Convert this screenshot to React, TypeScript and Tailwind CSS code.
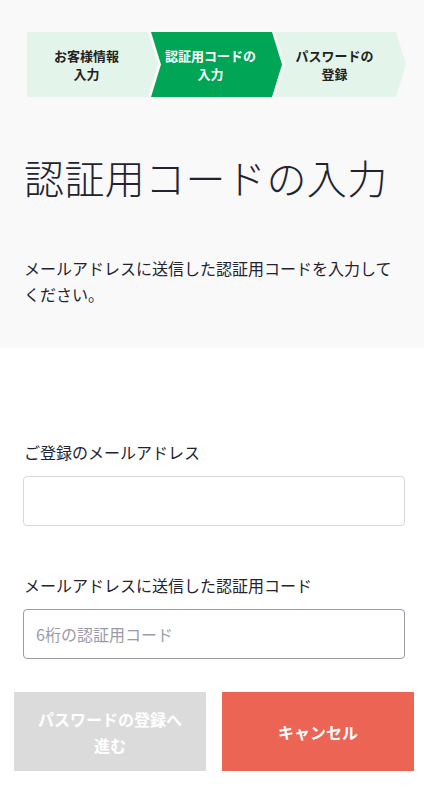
import React from "react";

const font = { fontFamily: '"Noto Sans CJK JP", "Noto Sans", sans-serif' };

const steps = [
  { label: ["お客様情報", "入力"], active: false },
  { label: ["認証用コードの", "入力"], active: true },
  { label: ["パスワードの", "登録"], active: false },
];

function Steps() {
  return (
    <div className="flex pl-[27px]">
      {steps.map((s, i) => (
        <div
          key={i}
          className={`flex h-[65px] w-[131px] shrink-0 flex-col items-center justify-center pr-3 text-[13px] font-bold leading-[18px] ${
            i > 0 ? "-ml-[7px]" : ""
          } ${s.active ? "bg-[#00a556] text-white" : "bg-[#e3f5ea] text-[#222]"}`}
          style={{
            clipPath:
              i === 0
                ? "polygon(0 0, calc(100% - 10px) 0, 100% 50%, calc(100% - 10px) 100%, 0 100%)"
                : "polygon(0 0, calc(100% - 10px) 0, 100% 50%, calc(100% - 10px) 100%, 0 100%, 10px 50%)",
          }}
        >
          <span>{s.label[0]}</span>
          <span>{s.label[1]}</span>
        </div>
      ))}
    </div>
  );
}

export default function App() {
  return (
    <div className="min-h-[805px] w-[424px] bg-white text-[#23232f]" style={font}>
      {/* ヘッダー部 */}
      <div className="bg-[#f9f9f9] pt-8 pb-[41px]">
        <Steps />
        <h1 className="mt-[52px] px-6 text-[40px] font-light leading-[56px] tracking-[0.01em]">
          認証用コードの入力
        </h1>
        <p className="mt-[50px] px-6 text-base leading-[26px]">
          メールアドレスに送信した認証用コードを入力してください。
        </p>
      </div>

      {/* フォーム */}
      <div className="px-6 pt-[92px]">
        <label className="block text-base leading-6">ご登録のメールアドレス</label>
        <input
          type="email"
          className="mt-3 block h-[50px] w-[382px] -ml-px rounded border border-[#d8d8dc] bg-white px-3 text-base outline-none"
        />
        <label className="mt-[47px] block text-base leading-6">
          メールアドレスに送信した認証用コード
        </label>
        <input
          type="text"
          placeholder="6桁の認証用コード"
          className="mt-3 block h-[50px] w-[382px] -ml-px rounded border border-[#9a9aa8] bg-white px-3 text-base outline-none placeholder:text-[#9a9aa8]"
        />
      </div>

      {/* ボタン */}
      <div className="mt-[33px] flex gap-4 pl-[14px]">
        <button className="flex h-[79px] w-[192px] shrink-0 items-center justify-center bg-[#dbdbdb] px-[22px] text-base font-bold leading-[26px] text-white">
          パスワードの登録へ進む
        </button>
        <button className="flex h-[79px] w-[192px] shrink-0 items-center justify-center bg-[#ec6453] text-base font-bold text-white">
          キャンセル
        </button>
      </div>
    </div>
  );
}
